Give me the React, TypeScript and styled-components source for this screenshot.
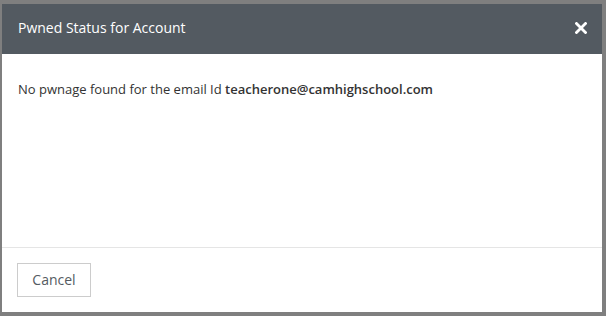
import React from 'react'
import styled, { createGlobalStyle } from 'styled-components'

const GlobalStyle = createGlobalStyle`
  html, body {
    margin: 0;
    padding: 0;
    background: #7f7f7f;
    font-family: 'Open Sans', 'Liberation Sans', sans-serif;
  }
`

const Backdrop = styled.div`
  width: 606px;
  height: 316px;
  padding: 4px 4px 4px 2px;
  box-sizing: border-box;
  background: #7f7f7f;
  overflow: hidden;
`

const Modal = styled.div`
  width: 600px;
  height: 308px;
  background: #ffffff;
  display: flex;
  flex-direction: column;
`

const Header = styled.header`
  height: 50px;
  flex: none;
  background-color: #535a61;
  display: flex;
  align-items: center;
  justify-content: space-between;
  padding: 0 14px 0 16px;
  box-sizing: border-box;
`

const Title = styled.h4`
  margin: 0;
  color: #ffffff;
  font-size: 14px;
  font-weight: 400;
  line-height: 20px;
  padding-bottom: 2px;
`

const CloseButton = styled.button`
  background: none;
  border: none;
  padding: 0;
  width: 14px;
  height: 14px;
  display: flex;
  align-items: center;
  justify-content: center;
  cursor: pointer;
  margin-bottom: 2px;
`

const Body = styled.div`
  flex: 1;
  padding: 26px 16px 0;
  color: #333333;
  font-size: 13px;
  line-height: 18px;
`

const Email = styled.strong`
  font-weight: 600;
`

const Footer = styled.footer`
  flex: none;
  height: 65px;
  border-top: 1px solid #e5e5e5;
  box-sizing: border-box;
  padding: 15px 15px;
`

const CancelButton = styled.button`
  height: 34px;
  width: 74px;
  background: #ffffff;
  border: 1px solid #cccccc;
  border-radius: 0;
  color: #555b62;
  font-family: 'Open Sans', 'Liberation Sans', sans-serif;
  font-size: 14px;
  line-height: 20px;
  padding: 0;
  cursor: pointer;
`

const App: React.FC = () => {
  return (
    <>
      <GlobalStyle />
      <Backdrop>
        <Modal>
          <Header>
            <Title>Pwned Status for Account</Title>
            <CloseButton aria-label="Close">
              <svg width="12" height="12" viewBox="0 0 12 12">
                <path d="M1.5 1.5 L10.5 10.5 M10.5 1.5 L1.5 10.5" stroke="#ffffff" strokeWidth="2.8" strokeLinecap="square" />
              </svg>
            </CloseButton>
          </Header>
          <Body>
            No pwnage found for the email Id <Email>teacherone@camhighschool.com</Email>
          </Body>
          <Footer>
            <CancelButton>Cancel</CancelButton>
          </Footer>
        </Modal>
      </Backdrop>
    </>
  )
}

export default App
